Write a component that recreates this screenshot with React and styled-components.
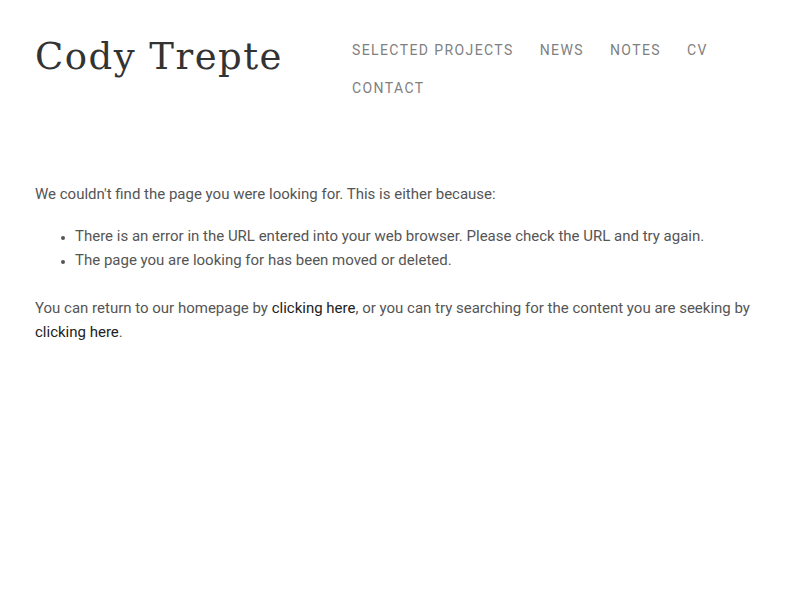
import React from "react";
import styled, { createGlobalStyle } from "styled-components";

const Global = createGlobalStyle`
  html, body { margin: 0; padding: 0; background: #fff; }
  body { font-family: Roboto, "Liberation Sans", sans-serif; }
`;

const Page = styled.div`
  padding: 0 35px;
`;

const Header = styled.header`
  display: flex;
  align-items: flex-start;
  justify-content: space-between;
  padding-top: 30px;
`;

const Title = styled.h1`
  margin: 0;
  font-family: "DejaVu Serif", "Liberation Serif", serif;
  font-weight: 400;
  font-size: 37px;
  letter-spacing: 0.04em;
  line-height: 54px;
  color: #333;
  white-space: nowrap;
`;

const Nav = styled.nav`
  display: flex;
  flex-wrap: wrap;
  column-gap: 26px;
  width: 413px;
  margin-top: 1px;
`;

const NavLink = styled.a`
  font-family: Roboto, sans-serif;
  font-size: 14px;
  letter-spacing: 0.1em;
  line-height: 38px;
  color: #808080;
  text-decoration: none;
  text-transform: uppercase;
  white-space: nowrap;
`;

const Main = styled.main`
  padding-top: 75px;
  font-size: 15px;
  line-height: 24px;
  color: #555;
`;

const Para = styled.p`
  margin: 0 0 ${(p) => p.$mb || 0}px;
`;

const List = styled.ul`
  margin: 0 0 24px;
  padding-left: 40px;
  li::marker { font-size: 12px; }
`;

const Link = styled.a`
  color: #222;
  text-decoration: none;
`;

export default function App() {
  return (
    <Page>
      <Global />
      <Header>
        <Title>Cody Trepte</Title>
        <Nav>
          <NavLink>Selected Projects</NavLink>
          <NavLink>News</NavLink>
          <NavLink>Notes</NavLink>
          <NavLink>CV</NavLink>
          <NavLink>Contact</NavLink>
        </Nav>
      </Header>
      <Main>
        <Para $mb={18}>We couldn't find the page you were looking for. This is either because:</Para>
        <List>
          <li>There is an error in the URL entered into your web browser. Please check the URL and try again.</li>
          <li>The page you are looking for has been moved or deleted.</li>
        </List>
        <Para>
          You can return to our homepage by <Link href="#">clicking here</Link>, or you can try searching for the content you are seeking by <Link href="#">clicking here</Link>.
        </Para>
      </Main>
    </Page>
  );
}
